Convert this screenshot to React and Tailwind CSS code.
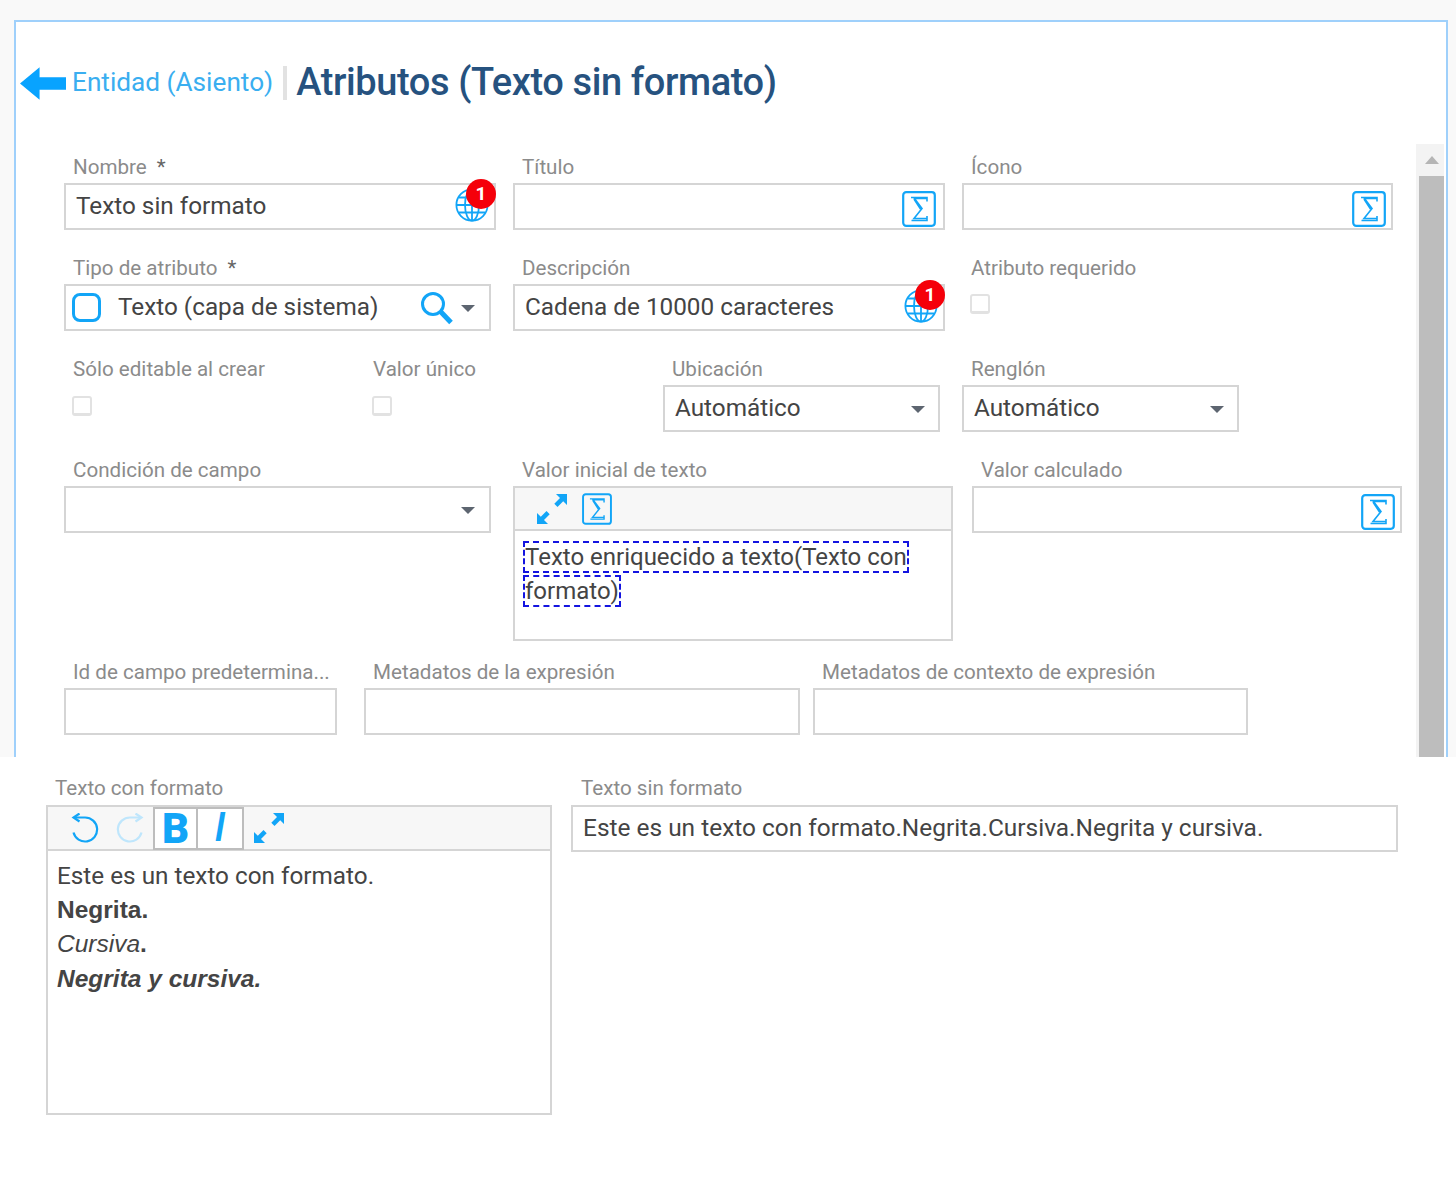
import React from 'react'

const font = { fontFamily: 'Roboto, sans-serif' }

function Sigma({ className = 'w-[34px] h-[36px]' }) {
    return (
        <svg viewBox="0 0 34 36" className={className} fill="none">
            <rect x="1.2" y="1.2" width="31.6" height="33.6" rx="3" stroke="#12a5f7" strokeWidth="2.2" />
            <path d="M9 6.500h16v4M24.500 7.500H12.500l7.500 10-8 10h13.500M9.500 29.500H25v-4.500M12 8l6.500 10" stroke="#12a5f7" strokeWidth="1.6" />
        </svg>
    )
}

function Globe({ className = '' }) {
    return (
        <div className={`relative w-[41px] h-[43px] ${className}`}>
            <svg viewBox="0 0 34 34" className="absolute left-0 bottom-0 w-[34px] h-[34px]" fill="none" stroke="#12a5f7" strokeWidth="1.8">
                <circle cx="17" cy="17" r="15.600" />
                <ellipse cx="17" cy="17" rx="7" ry="15.600" />
                <path d="M17 1.400v31.200M1.400 17h31.200M4 9.500h26M4 24.500h26" />
            </svg>
            <span className="absolute right-0 top-0 w-[30px] h-[30px] rounded-full bg-[#f5000a] text-white text-[19px] font-bold flex items-center justify-center">1</span>
        </div>
    )
}

function Caret() {
    return <span className="mt-[2px] w-0 h-0 border-x-[7px] border-x-transparent border-t-[7px] border-t-[#5d6570]" />
}

function Expand() {
    return (
        <svg viewBox="0 0 32 32" className="w-[32px] h-[32px]" fill="#12a5f7">
            <path d="M20 1h11v11l-3.800-3.800-5.700 5.700-3.200-3.200 5.700-5.700z" />
            <path d="M1 31V20l3.800 3.800 5.700-5.700 3.200 3.200-5.700 5.700L12 31z" />
        </svg>
    )
}

function Undo({ light, flip }) {
    return (
        <svg viewBox="0 0 30 30" className={`w-[30px] h-[30px] ${flip ? '-scale-x-100' : ''}`} fill="none" stroke={light ? '#bfe6fc' : '#12a5f7'} strokeWidth="2.2">
            <path d="M4 4.500h11a12 12 0 1 1-11.500 15" />
            <path d="M9.500 0.500l-6 4 6 4" />
        </svg>
    )
}

function Label({ children, star }) {
    return (
        <div className="h-[39px] pl-[9px] pt-[10px] text-[20.600px] leading-[26px] text-[#8b8b8b] whitespace-nowrap">
            {children}
            {star && <span className="ml-[10px] text-[#666]">*</span>}
        </div>
    )
}

function Box({ children, className = '' }) {
    return (
        <div className={`h-[47px] border-2 border-[#d5d5d5] bg-white flex items-center pl-[10px] text-[24.300px] text-[#444] whitespace-nowrap ${className}`}>
            {children}
        </div>
    )
}

function Check() {
    return <div className="ml-[8px] mt-[11px] w-[20px] h-[20px] rounded-[3px] border-2 border-[#e2e2e2] border-b-[3px] bg-white" />
}

export default function App() {
    return (
        <div className="w-[1456px] h-[1198px] bg-white overflow-hidden" style={font}>
            <div className="h-[757px] bg-[#f9f9f9] pt-[20px] pl-[14px] pr-[8px]">
                <div className="h-[737px] bg-white border-2 border-b-0 border-[#9fd0fb]">
                    <div className="h-[122px] flex items-center pl-[4px]">
                        <svg viewBox="0 0 47 33" className="w-[46px] h-[33px]" fill="#08a3ff">
                            <path d="M20 0v10h27v13H20v10L0 16.500z" />
                        </svg>
                        <span className="ml-[6px] text-[26.200px] text-[#3aaef0]">Entidad (Asiento)</span>
                        <span className="ml-[10px] w-[4px] h-[34px] bg-[#e2e2e2]" />
                        <span className="ml-[9px] -mt-[2px] text-[38px] font-medium text-[#26527f] tracking-[-0.4px]">Atributos (Texto sin formato)</span>
                    </div>
                    <div className="flex">
                        <div className="w-[1400px] pl-[48px]">
                            <div className="flex mb-[15px]">
                                <div className="w-[432px]">
                                    <Label star>Nombre</Label>
                                    <Box className="justify-between">Texto sin formato<Globe className="-mt-[12px] -mr-[2px]" /></Box>
                                </div>
                                <div className="w-[432px] ml-[17px]">
                                    <Label>Título</Label>
                                    <Box className="justify-end pr-[7px]"><Sigma className="w-[34px] h-[36px] mt-[5px]" /></Box>
                                </div>
                                <div className="w-[431px] ml-[17px]">
                                    <Label>Ícono</Label>
                                    <Box className="justify-end pr-[5px]"><Sigma className="w-[34px] h-[36px] mt-[5px]" /></Box>
                                </div>
                            </div>
                            <div className="flex mb-[15px]">
                                <div className="w-[427px]">
                                    <Label star>Tipo de atributo</Label>
                                    <Box>
                                        <span className="w-[29px] h-[29px] rounded-[8px] border-[3px] border-[#12a5f7] -ml-[4px]" />
                                        <span className="ml-[17px]">Texto (capa de sistema)</span>
                                        <svg viewBox="0 0 34 34" className="ml-[42px] w-[34px] h-[34px]" fill="none" stroke="#12a5f7">
                                            <circle cx="13" cy="13" r="10.500" strokeWidth="3" />
                                            <path d="M20.500 20.500L31 31.500" strokeWidth="5" />
                                        </svg>
                                        <span className="ml-[7px] flex"><Caret /></span>
                                    </Box>
                                </div>
                                <div className="w-[432px] ml-[22px]">
                                    <Label>Descripción</Label>
                                    <Box className="justify-between">Cadena de 10000 caracteres<Globe className="-mt-[12px] -mr-[2px]" /></Box>
                                </div>
                                <div className="ml-[17px]">
                                    <Label>Atributo requerido</Label>
                                    <div className="-mt-[1px]"><Check /></div>
                                </div>
                            </div>
                            <div className="flex mb-[15px]">
                                <div className="w-[300px]">
                                    <Label>Sólo editable al crear</Label>
                                    <Check />
                                </div>
                                <div className="w-[299px]">
                                    <Label>Valor único</Label>
                                    <Check />
                                </div>
                                <div className="w-[277px]">
                                    <Label>Ubicación</Label>
                                    <Box className="justify-between pr-[13px]">Automático<Caret /></Box>
                                </div>
                                <div className="w-[277px] ml-[22px]">
                                    <Label>Renglón</Label>
                                    <Box className="justify-between pr-[13px]">Automático<Caret /></Box>
                                </div>
                            </div>
                            <div className="flex mb-[8px]">
                                <div className="w-[427px]">
                                    <Label>Condición de campo</Label>
                                    <Box className="justify-end pr-[14px]"><Caret /></Box>
                                </div>
                                <div className="w-[440px] ml-[22px]">
                                    <Label>Valor inicial de texto</Label>
                                    <div className="h-[155px] border-2 border-[#d5d5d5]">
                                        <div className="h-[43px] bg-[#f7f7f7] border-b-2 border-[#d5d5d5] flex items-center pl-[21px] gap-[14px]">
                                            <Expand />
                                            <Sigma className="w-[30px] h-[32px]" />
                                        </div>
                                        <div className="pl-[8px] pt-[9px] pr-[30px] text-[24px] leading-[34px] text-[#444]">
                                            <span className="border-2 border-dashed border-[#1414e0] box-decoration-clone">Texto enriquecido a texto(Texto con formato)</span>
                                        </div>
                                    </div>
                                </div>
                                <div className="w-[430px] ml-[19px]">
                                    <Label>Valor calculado</Label>
                                    <Box className="justify-end pr-[5px]"><Sigma className="w-[34px] h-[36px] mt-[5px]" /></Box>
                                </div>
                            </div>
                            <div className="flex">
                                <div className="w-[273px]">
                                    <Label>Id de campo predetermina...</Label>
                                    <Box />
                                </div>
                                <div className="w-[436px] ml-[27px]">
                                    <Label>Metadatos de la expresión</Label>
                                    <Box />
                                </div>
                                <div className="w-[435px] ml-[13px]">
                                    <Label>Metadatos de contexto de expresión</Label>
                                    <Box />
                                </div>
                            </div>
                        </div>
                        <div className="w-[28px] h-[613px] bg-[#f3f3f3] pl-[3px] flex flex-col">
                            <div className="h-[32px] flex items-center justify-center">
                                <span className="w-0 h-0 border-x-[7px] border-x-transparent border-b-[8px] border-b-[#b5b5b5]" />
                            </div>
                            <div className="flex-1 bg-[#bdbdbd]" />
                        </div>
                    </div>
                </div>
            </div>
            <div className="flex pl-[46px]">
                <div className="w-[506px]">
                    <div className="h-[48px] pl-[9px] pt-[18px] text-[20.600px] leading-[26px] text-[#8b8b8b]">Texto con formato</div>
                    <div className="h-[310px] border-2 border-[#d5d5d5]">
                        <div className="h-[44px] bg-[#f7f7f7] border-b-2 border-[#d5d5d5] flex items-center pl-[22px]">
                            <Undo />
                            <span className="ml-[15px]"><Undo light flip /></span>
                            <span className="ml-[8px] w-[45px] h-[43px] bg-white border-2 border-[#bdbdbd] flex items-center justify-center text-[42px] font-black text-[#12a5f7]">B</span>
                            <span className="w-[46px] h-[43px] bg-white border-2 border-l-0 border-[#bdbdbd] flex items-center justify-center text-[40px] font-medium italic text-[#12a5f7]">I</span>
                            <span className="ml-[9px]"><Expand /></span>
                        </div>
                        <div className="pl-[9px] pt-[8px] text-[24.300px] leading-[34.300px] text-[#444]">
                            <div>Este es un texto con formato.</div>
                            <div className="font-bold font-['Liberation_Sans'] text-[24.500px]">Negrita.</div>
                            <div className="font-['Liberation_Sans'] text-[24.500px] -mt-[1px]"><span className="italic">Cursiva</span><span className="font-bold">.</span></div>
                            <div className="font-bold italic font-['Liberation_Sans'] text-[24.500px] mt-[1px]">Negrita y cursiva.</div>
                        </div>
                    </div>
                </div>
                <div className="w-[827px] ml-[19px]">
                    <div className="h-[48px] pl-[10px] pt-[18px] text-[20.600px] leading-[26px] text-[#8b8b8b]">Texto sin formato</div>
                    <Box className="text-[24.450px]">Este es un texto con formato.Negrita.Cursiva.Negrita y cursiva.</Box>
                </div>
            </div>
        </div>
    )
}
